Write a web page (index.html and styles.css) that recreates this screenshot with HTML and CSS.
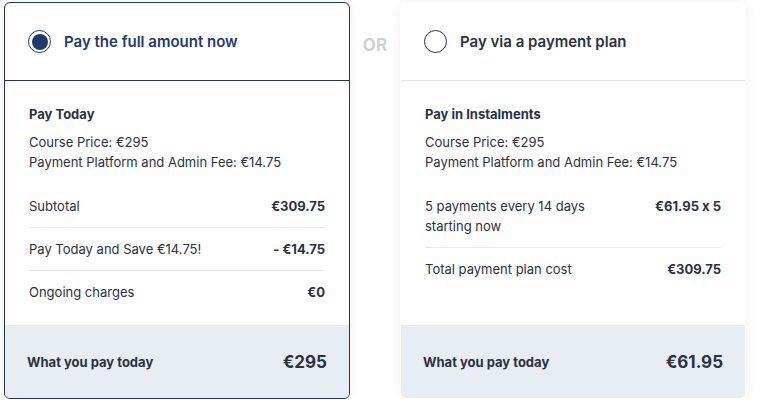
FILE: index.html
```html
<!DOCTYPE html>
<html>
<head>
<meta charset="utf-8">
<link rel="stylesheet" href="styles.css">
</head>
<body>
<div class="wrap">
  <div class="card card--selected">
    <div class="card-head">
      <span class="radio radio--on"><span class="radio-dot"></span></span>
      <span class="head-title head-title--on">Pay the full amount now</span>
    </div>
    <div class="card-body">
      <div class="section-title">Pay Today</div>
      <div class="info">
        <div>Course Price: €295</div>
        <div>Payment Platform and Admin Fee: €14.75</div>
      </div>
      <div class="rows">
        <div class="row"><span>Subtotal</span><span class="val">€309.75</span></div>
        <div class="row"><span>Pay Today and Save €14.75!</span><span class="val">- €14.75</span></div>
        <div class="row"><span>Ongoing charges</span><span class="val">€0</span></div>
      </div>
    </div>
    <div class="card-foot">
      <span class="foot-label">What you pay today</span>
      <span class="foot-price">€295</span>
    </div>
  </div>
  <div class="or">OR</div>
  <div class="card">
    <div class="card-head">
      <span class="radio"></span>
      <span class="head-title">Pay via a payment plan</span>
    </div>
    <div class="card-body">
      <div class="section-title">Pay in Instalments</div>
      <div class="info">
        <div>Course Price: €295</div>
        <div>Payment Platform and Admin Fee: €14.75</div>
      </div>
      <div class="rows">
        <div class="row"><span>5 payments every 14 days<br>starting now</span><span class="val">€61.95 x 5</span></div>
        <div class="row"><span>Total payment plan cost</span><span class="val">€309.75</span></div>
      </div>
    </div>
    <div class="card-foot">
      <span class="foot-label">What you pay today</span>
      <span class="foot-price">€61.95</span>
    </div>
  </div>
</div>
</body>
</html>
```
FILE: styles.css
```css
* { box-sizing: border-box; }
html, body { margin: 0; padding: 0; background: #ffffff; }
body {
  font-family: "Inter", "Liberation Sans", sans-serif;
  font-feature-settings: "calt" 0;
  color: #2a3242;
  font-size: 13px;
}
.wrap {
  display: flex;
  align-items: stretch;
  padding: 2px 0 0 4px;
  height: 399px;
}
.card {
  width: 346px;
  display: flex;
  flex-direction: column;
  background: #fff;
  border-radius: 6px;
  border: 1px solid transparent;
  box-shadow: 0 0 14px rgba(0, 0, 0, 0.06);
  overflow: hidden;
}
.card--selected {
  border-color: #22355e;
}
.card-head {
  height: 78px;
  display: flex;
  align-items: center;
  padding-left: 23px;
  gap: 13px;
  border-bottom: 1px solid #e6e6e6;
}
.card--selected .card-head { border-bottom-color: #22355e; }
.radio {
  width: 23px;
  height: 23px;
  border-radius: 50%;
  border: 1.5px solid #2b2f38;
  display: flex;
  align-items: center;
  justify-content: center;
  flex: none;
}
.radio--on { border-color: #1f3a6c; }
.radio-dot {
  width: 16px;
  height: 16px;
  border-radius: 50%;
  background: #1f3a6c;
}
.head-title {
  font-size: 15px;
  font-weight: 600;
  color: #2b3342;
}
.head-title--on { color: #1f3a6c; }
.card-body {
  padding: 23px 24px 0 24px;
  flex: 1;
  line-height: 20px;
}
.section-title {
  font-weight: 700;
}
.info {
  margin-top: 8px;
}
.rows {
  margin-top: 13px;
}
.row {
  display: flex;
  justify-content: space-between;
  padding: 11px 0;
  border-bottom: 1px solid #e6e8eb;
}
.row:last-child { border-bottom: none; }
.val { font-weight: 700; }
.card-foot {
  height: 73px;
  background: #e8edf3;
  display: flex;
  align-items: center;
  justify-content: space-between;
  padding: 0 22px;
}
.foot-label { font-weight: 700; font-size: 13px; }
.foot-price { font-weight: 700; font-size: 17px; }
.or {
  width: 50px;
  padding-top: 33px;
  text-align: center;
  font-weight: 700;
  font-size: 17px;
  color: #cfd0d2;
}
```
